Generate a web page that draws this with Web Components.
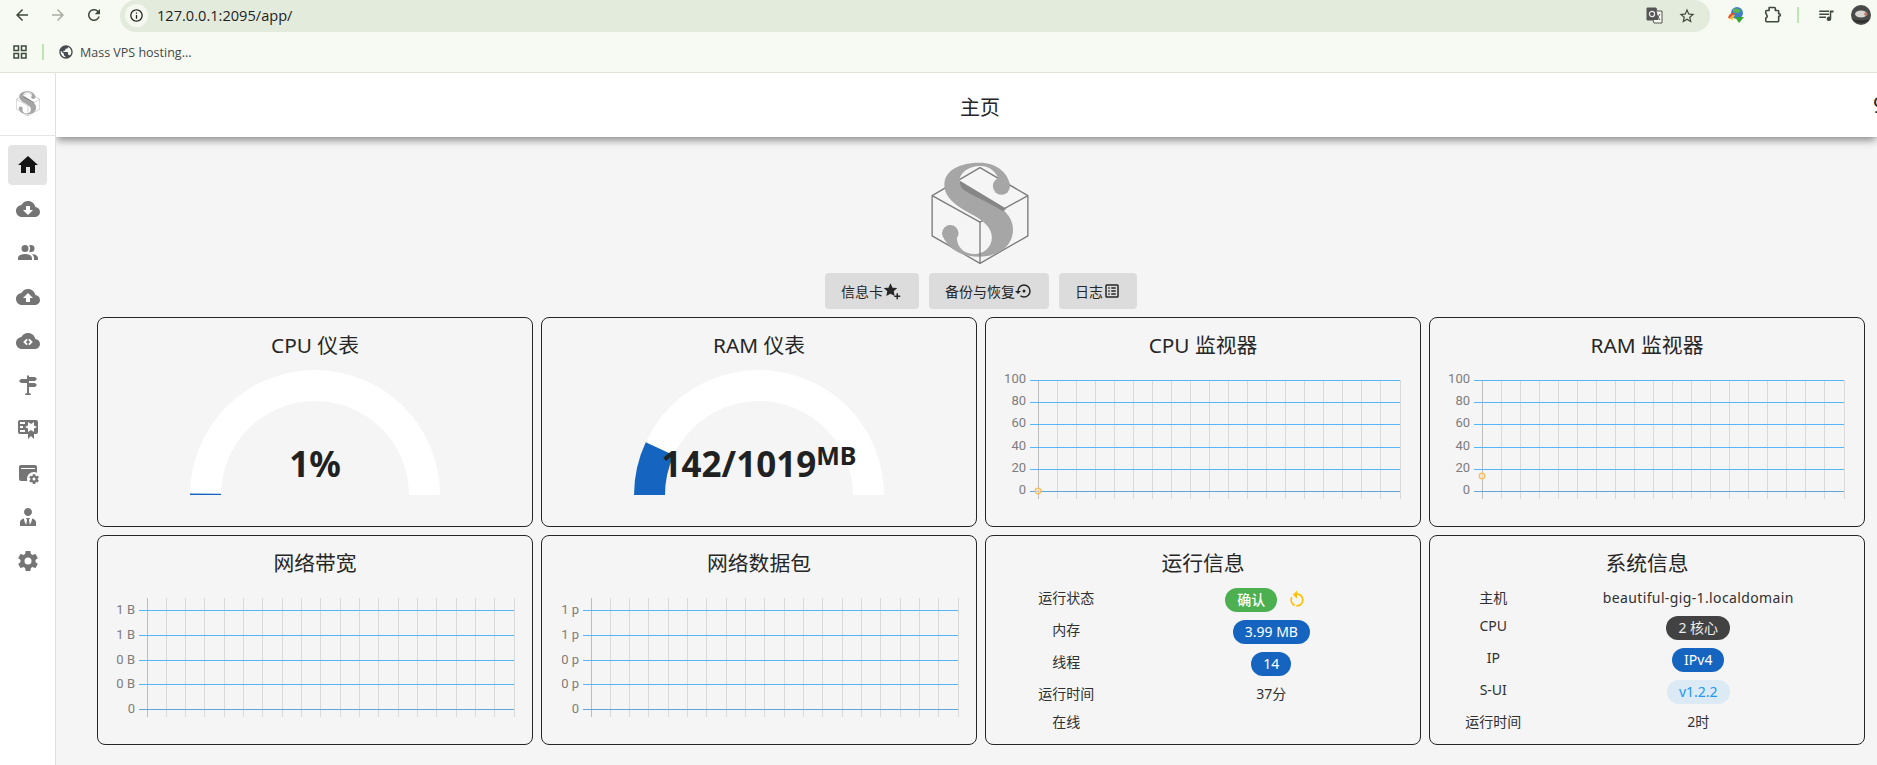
<!DOCTYPE html>
<html lang="zh">
<head>
<meta charset="utf-8">
<title>S-UI</title>
<style>
  html, body { margin: 0; height: 100%; overflow: hidden; background: #f5f5f5; }
  body { font-family: "Noto Sans", "Noto Sans CJK SC", sans-serif; color: #212121; }
</style>
</head>
<body>
<app-shell>
  <dash-card label="CPU 仪表"><gauge-chart pct="0.4" value="1%"></gauge-chart></dash-card>
  <dash-card label="RAM 仪表"><gauge-chart pct="13.9" value="142/1019" unit="MB"></gauge-chart></dash-card>
  <dash-card label="CPU 监视器"><line-chart labels="100,80,60,40,20,0" top="14" step="22.2" tick="44" first="51.5" last="413.5" lift="2" dot="125"></line-chart></dash-card>
  <dash-card label="RAM 监视器"><line-chart labels="100,80,60,40,20,0" top="14" step="22.2" tick="44" first="51.5" last="413.5" lift="2" dot="110"></line-chart></dash-card>
  <dash-card label="网络带宽"><line-chart labels="1 B,1 B,0 B,0 B,0" top="26" step="24.75" tick="41" first="48.5" last="415.5" lift="1"></line-chart></dash-card>
  <dash-card label="网络数据包"><line-chart labels="1 p,1 p,0 p,0 p,0" top="26" step="24.75" tick="41" first="48.5" last="415.5" lift="1"></line-chart></dash-card>
  <dash-card label="运行信息">
    <info-table span="4">
      <info-row label="运行状态" chip><status-chip tone="green"><b>确认</b></status-chip><reload-button></reload-button></info-row>
      <info-row label="内存" chip><status-chip tone="blue">3.99 MB</status-chip></info-row>
      <info-row label="线程" chip><status-chip tone="blue">14</status-chip></info-row>
      <info-row label="运行时间">37分</info-row>
      <info-row label="在线"></info-row>
    </info-table>
  </dash-card>
  <dash-card label="系统信息">
    <info-table span="3">
      <info-row label="主机"><span style="letter-spacing:.37px">beautiful-gig-1.localdomain</span></info-row>
      <info-row label="CPU" chip><status-chip tone="dark">2 核心</status-chip></info-row>
      <info-row label="IP" chip><status-chip tone="blue">IPv4</status-chip></info-row>
      <info-row label="S-UI" chip><status-chip tone="light">v1.2.2</status-chip></info-row>
      <info-row label="运行时间">2时</info-row>
    </info-table>
  </dash-card>
</app-shell>

<script>
const mdi = {
  home: 'M10,20V14H14V20H19V12H22L12,3L2,12H5V20H10Z',
  cloudDown: 'M19.35 10.04C18.67 6.59 15.64 4 12 4 9.11 4 6.6 5.64 5.35 8.04 2.34 8.36 0 10.91 0 14c0 3.31 2.69 6 6 6h13c2.76 0 5-2.24 5-5 0-2.64-2.05-4.78-4.65-4.96zM17 13l-5 5-5-5h3V9h4v4h3z',
  users: 'M16 17V19H2V17S2 13 9 13 16 17 16 17M12.5 7.5A3.5 3.5 0 1 0 9 11A3.5 3.5 0 0 0 12.5 7.5M15.94 13A5.32 5.32 0 0 1 18 17V19H22V17S22 13.37 15.94 13M15 4A3.39 3.39 0 0 0 13.07 4.59A5 5 0 0 1 13.07 10.41A3.39 3.39 0 0 0 15 11A3.5 3.5 0 0 0 15 4Z',
  cloudUp: 'M19.35 10.04C18.67 6.59 15.64 4 12 4 9.11 4 6.6 5.64 5.35 8.04 2.34 8.36 0 10.91 0 14c0 3.31 2.69 6 6 6h13c2.76 0 5-2.24 5-5 0-2.64-2.05-4.78-4.65-4.96zM14 13v4h-4v-4H7l5-5 5 5h-3z',
  cloudCode: 'M19.35 10.04C18.67 6.59 15.64 4 12 4 9.11 4 6.6 5.64 5.35 8.04 2.34 8.36 0 10.91 0 14c0 3.31 2.69 6 6 6h13c2.76 0 5-2.24 5-5 0-2.64-2.05-4.78-4.65-4.96zM10.5 16.3L7.2 13l3.3-3.3 1.3 1.3-2 2 2 2zM13.5 16.3l-1.3-1.3 2-2-2-2 1.3-1.3 3.3 3.3z',
  routes: 'M11,10H5L3,8L5,6H11V3L12,2L13,3V4H19L21,6L19,8H13V10H19L21,12L19,14H13V20A2,2 0 0,1 15,22H9A2,2 0 0,1 11,20V10Z',
  cert: 'M4,3C2.89,3 2,3.89 2,5V15A2,2 0 0,0 4,17H12V22L15,19L18,22V17H20A2,2 0 0,0 22,15V8L22,6V5A2,2 0 0,0 20,3H16V3H4M12,5L15,7L18,5V8.5L21,10L18,11.5V15L15,13L12,15V11.5L9,10L12,8.5V5M4,5H9V7H4V5M4,9H7V11H4V9M4,13H9V15H4V13Z',
  appCog: 'M21.7 18.6V17.6L22.8 16.8C22.9 16.7 23 16.6 22.9 16.5L21.9 14.8C21.9 14.7 21.7 14.7 21.6 14.7L20.4 15.2C20.1 15 19.8 14.8 19.5 14.7L19.3 13.4C19.3 13.3 19.2 13.2 19.1 13.2H17.1C16.9 13.2 16.8 13.3 16.8 13.4L16.6 14.7C16.3 14.9 16.1 15 15.8 15.2L14.6 14.7C14.5 14.7 14.4 14.7 14.3 14.8L13.3 16.5C13.3 16.6 13.3 16.7 13.4 16.8L14.5 17.6V18.6L13.4 19.4C13.3 19.5 13.2 19.6 13.3 19.7L14.3 21.4C14.4 21.5 14.5 21.5 14.6 21.5L15.8 21C16 21.2 16.3 21.4 16.6 21.5L16.8 22.8C16.9 22.9 17 23 17.1 23H19.1C19.2 23 19.3 22.9 19.3 22.8L19.5 21.5C19.8 21.3 20 21.2 20.3 21L21.5 21.4C21.6 21.4 21.7 21.4 21.8 21.3L22.8 19.6C22.9 19.5 22.9 19.4 22.8 19.4L21.7 18.6M18 19.5C17.2 19.5 16.5 18.8 16.5 18S17.2 16.5 18 16.5 19.5 17.2 19.5 18 18.8 19.5 18 19.5M11 18C11 14.1 14.1 11 18 11C19.1 11 20.1 11.3 21 11.7V6C21 4.9 20.1 4 19 4H5C3.9 4 3 4.9 3 6V18C3 19.1 3.9 20 5 20H11.3C11.1 19.4 11 18.7 11 18M5 7H19V8H5V7Z',
  tie: 'M12 3C14.21 3 16 4.79 16 7S14.21 11 12 11 8 9.21 8 7 9.79 3 12 3M16 13.54C16 14.6 15.72 17.07 13.81 19.83L13 15L13.94 13.12C13.32 13.05 12.67 13 12 13S10.68 13.05 10.06 13.12L11 15L10.19 19.83C8.28 17.07 8 14.6 8 13.54C5.61 14.24 4 15.5 4 17V21H20V17C20 15.5 18.4 14.24 16 13.54Z',
  cog: 'M12,15.5A3.5,3.5 0 0,1 8.5,12A3.5,3.5 0 0,1 12,8.5A3.5,3.5 0 0,1 15.5,12A3.5,3.5 0 0,1 12,15.5M19.43,12.97C19.47,12.65 19.5,12.33 19.5,12C19.5,11.67 19.47,11.34 19.43,11L21.54,9.37C21.73,9.22 21.78,8.95 21.66,8.73L19.66,5.27C19.54,5.05 19.27,4.96 19.05,5.05L16.56,6.05C16.04,5.66 15.5,5.32 14.87,5.07L14.5,2.42C14.46,2.18 14.25,2 14,2H10C9.75,2 9.54,2.18 9.5,2.42L9.13,5.07C8.5,5.32 7.96,5.66 7.44,6.05L4.95,5.05C4.73,4.96 4.46,5.05 4.34,5.27L2.34,8.73C2.21,8.95 2.27,9.22 2.46,9.37L4.57,11C4.53,11.34 4.5,11.67 4.5,12C4.5,12.33 4.53,12.65 4.57,12.97L2.46,14.63C2.27,14.78 2.21,15.05 2.34,15.27L4.34,18.73C4.46,18.95 4.73,19.03 4.95,18.95L7.44,17.94C7.96,18.34 8.5,18.68 9.13,18.93L9.5,21.58C9.54,21.82 9.75,22 10,22H14C14.25,22 14.46,21.82 14.5,21.58L14.87,18.93C15.5,18.67 16.04,18.34 16.56,17.94L19.05,18.95C19.27,19.03 19.54,18.95 19.66,18.73L21.66,15.27C21.78,15.05 21.73,14.78 21.54,14.63L19.43,12.97Z',
  starPlus: 'M10 1.500l2.700 6 6.300.6-4.700 4.300 1.300 6.300-5.600-3.200-5.600 3.200 1.300-6.300L1 8.100l6.300-.6zM18 15h2v3h3v2h-3v3h-2v-3h-3v-2h3z',
  restore: 'M12,3A9,9 0 0,0 3,12H0L4,16L8,12H5A7,7 0 0,1 12,5A7,7 0 0,1 19,12A7,7 0 0,1 12,19C10.5,19 9.09,18.5 7.94,17.7L6.5,19.14C8.04,20.3 9.94,21 12,21A9,9 0 0,0 21,12A9,9 0 0,0 12,3M14,12A2,2 0 0,0 12,10A2,2 0 0,0 10,12A2,2 0 0,0 12,14A2,2 0 0,0 14,12Z',
  listBox: 'M5 3h14a2 2 0 0 1 2 2v14a2 2 0 0 1-2 2H5a2 2 0 0 1-2-2V5a2 2 0 0 1 2-2zm0 2v14h14V5zM7 7h2v2H7zM11 7h6v2h-6zM7 11h2v2H7zM11 11h6v2h-6zM7 15h2v2H7zM11 15h6v2h-6z',
  restart: 'M12,4C14.1,4 16.1,4.8 17.6,6.3C20.7,9.4 20.7,14.5 17.6,17.6C15.8,19.5 13.3,20.2 10.9,19.9L11.4,17.9C13.1,18.1 14.9,17.5 16.2,16.2C18.5,13.9 18.5,10.1 16.2,7.7C15.1,6.6 13.5,6 12,6V10.6L7,5.6L12,0.6V4M6.3,17.6C3.7,15 3.3,11 5.1,7.9L6.6,9.4C5.5,11.6 5.9,14.4 7.8,16.2C8.3,16.7 8.9,17.1 9.6,17.4L9,19.4C8,19 7.1,18.4 6.3,17.6Z',
  back: 'M20 11H7.83l5.59-5.59L12 4l-8 8 8 8 1.41-1.41L7.83 13H20v-2z',
  forward: 'M4 11h12.17l-5.59-5.59L12 4l8 8-8 8-1.41-1.41L16.17 13H4v-2z',
  reload: 'M17.65 6.35C16.2 4.9 14.21 4 12 4c-4.42 0-7.99 3.58-7.99 8s3.57 8 7.99 8c3.73 0 6.84-2.55 7.73-6h-2.08c-.82 2.33-3.04 4-5.65 4-3.31 0-6-2.69-6-6s2.69-6 6-6c1.66 0 3.14.69 4.22 1.78L13 11h7V4l-2.35 2.35z',
  star: 'M22 9.24l-7.19-.62L12 2 9.19 8.63 2 9.24l5.46 4.73L5.82 21 12 17.27 18.18 21l-1.63-7.03L22 9.24zM12 15.4l-3.76 2.27 1-4.28-3.32-2.88 4.38-.38L12 6.1l1.71 4.04 4.38.38-3.32 2.88 1 4.28L12 15.4z',
  info: 'M11 7h2v2h-2zm0 4h2v6h-2zm1-9C6.48 2 2 6.48 2 12s4.48 10 10 10 10-4.48 10-10S17.52 2 12 2zm0 18c-4.41 0-8-3.59-8-8s3.59-8 8-8 8 3.59 8 8-3.59 8-8 8z',
  apps: 'M3 3h8v8H3zm2 2v4h4V5zM13 3h8v8h-8zm2 2v4h4V5zM3 13h8v8H3zm2 2v4h4v-4zM13 13h8v8h-8zm2 2v4h4v-4z',
  globe: 'M12 2C6.48 2 2 6.48 2 12s4.48 10 10 10 10-4.48 10-10S17.52 2 12 2zm-1 17.93C7.05 19.44 4 16.08 4 12c0-.62.08-1.21.21-1.790L9 15v1c0 1.100.9 2 2 2v1.930zm6.900-2.540c-.26-.81-1-1.390-1.900-1.390h-1v-3c0-.55-.45-1-1-1H8v-2h2c.55 0 1-.45 1-1V7h2c1.100 0 2-.9 2-2v-.41c2.930 1.190 5 4.060 5 7.410 0 2.080-.8 3.970-2.100 5.390z',
  puzzle: 'M8.500 3h6.500a1 1 0 0 1 1 1v2.500h3a1 1 0 0 1 1 1V10.500h.5a1.500 1.500 0 0 1 0 3H20v5.500a1 1 0 0 1-1 1H5.500a1 1 0 0 1-1-1V15.500a2 2 0 0 0 1-3.500 2 2 0 0 0-1-2V7.500a1 1 0 0 1 1-1h3V4a1 1 0 0 1 .5-1z',
  queue: 'M3 6h13v2H3zM3 10h13v2H3zM3 14h9v2H3zM17 6h5v2.500h-3V17a3 3 0 1 1-2-2.830z'
};
const icon = (d, size, color = 'currentColor') =>
  `<svg width="${size}" height="${size}" viewBox="0 0 24 24" fill="${color}" fill-rule="evenodd" style="display:block;flex:none"><path d="${d}"/></svg>`;

const logoMarkup = (w, h) => `
  <svg width="${w}" height="${h}" viewBox="393 66 294 309" style="display:block">
    <g fill="none" stroke="#7b7b7b" stroke-width="4" stroke-linejoin="round">
      <path d="M540 83L685 168V290L540 373L395 290V168Z"/>
      <path d="M395 168L540 248M540 248L685 168"/>
    </g>
    <g fill="#a6a6a6">
      <circle cx="605" cy="139" r="26"/>
      <circle cx="450" cy="282" r="25"/>
      <path d="M630 135C625 95 585 68 540 68C480 68 432 90 432 135C432 175 470 200 510 222C545 240 576 262 576 295C576 325 550 345 525 345C490 345 472 325 470 298L428 288C438 325 480 353 535 353C600 353 640 320 640 270C640 225 600 200 560 178C520 158 478 145 478 122C478 100 505 78 540 78C575 78 590 100 600 125Z"/>
    </g>
    <path d="M478 122L620 208L610 215C570 190 520 170 490 150C482 143 478 132 478 122Z" fill="#868686"/>
    <path d="M540 248V373" fill="none" stroke="#7b7b7b" stroke-width="4"/>
  </svg>`;

class AppShell extends HTMLElement {
  constructor() {
    super();
    this.attachShadow({mode: 'open'}).innerHTML = `
      <style>
        :host { display: flex; flex-direction: column; height: 765px; overflow: hidden; }
        .body { flex: 1; display: flex; min-height: 0; }
        main { flex: 1; min-width: 0; display: flex; flex-direction: column; }
        .content { flex: 1; padding: 25px 12px 0 41px; display: flex; flex-direction: column; align-items: center; background: #f5f5f5; }
        s-logo { margin-right: 2px; }
        .actions { display: flex; gap: 10px; margin-top: 9px; margin-bottom: 8px; }
        .grid { width: 100%; display: grid; grid-template-columns: repeat(4, 1fr); grid-auto-rows: 210px; gap: 8px; }
      </style>
      <browser-chrome></browser-chrome>
      <div class="body">
        <side-nav></side-nav>
        <main>
          <app-bar>主页</app-bar>
          <div class="content">
            <s-logo></s-logo>
            <div class="actions">
              <tonal-button icon="starPlus" style="padding-right:18px">信息卡</tonal-button>
              <tonal-button icon="restore">备份与恢复</tonal-button>
              <tonal-button icon="listBox">日志</tonal-button>
            </div>
            <div class="grid"><slot></slot></div>
          </div>
        </main>
      </div>`;
  }
}

class BrowserChrome extends HTMLElement {
  constructor() {
    super();
    this.attachShadow({mode: 'open'}).innerHTML = `
      <style>
        :host { display: block; height: 73px; box-sizing: border-box; background: #f7faf2; border-bottom: 1px solid #dfe5d8; font-family: "Open Sans", Roboto, sans-serif; color: #3f4a3c; flex: none; }
        .top { height: 32px; display: flex; align-items: center; padding-left: 4px; }
        .btn { width: 36px; height: 32px; display: flex; align-items: center; justify-content: center; margin-top: -2px; }
        .pill { flex: 1; height: 32px; margin-left: 8px; background: #e3ebdd; border-radius: 16px; display: flex; align-items: center; padding-left: 5px; padding-right: 14px; }
        .badge { width: 23px; height: 23px; border-radius: 50%; background: #f4f8ef; display: flex; align-items: center; justify-content: center; margin-top: -2px; color: #1f1f1f; }
        .url { font-size: 14.6px; color: #1f1f1f; margin-left: 9px; margin-top: -2px; flex: 1; }
        .pill svg.t { margin-right: 15px; margin-top: -2px; }
        .right { display: flex; align-items: center; width: 167px; flex: none; padding-left: 8px; box-sizing: border-box; }
        .cell { width: 36px; height: 32px; display: flex; align-items: center; justify-content: center; margin-top: -2px; }
        .sep { width: 2px; height: 16px; background: #bbe7b0; margin: -2px 9px 0 7px; }
        .avatar { margin-left: 7px; margin-top: -2px; }
        .marks { height: 40px; display: flex; align-items: center; padding-left: 11px; }
        .marks .sep { margin: 0 14px 0 13px; }
        .mark { font-size: 12.5px; margin-left: 6px; color: #44484a; }
      </style>
      <div class="top">
        <div class="btn">${icon(mdi.back, 18)}</div>
        <div class="btn" style="color:#a9aea5">${icon(mdi.forward, 18)}</div>
        <div class="btn">${icon(mdi.reload, 18)}</div>
        <div class="pill">
          <div class="badge">${icon(mdi.info, 15)}</div>
          <div class="url">127.0.0.1:2095/app/</div>
          <svg class="t" width="17" height="17" viewBox="0 0 17 17">
            <path d="M1 1h9l1 3h5v12H8l-1-3H1z" fill="#f4f8ef" stroke="#555" stroke-width="1"/>
            <path d="M1 1h9l2.500 12H1z" fill="#555"/>
            <circle cx="6" cy="7" r="2.600" fill="none" stroke="#eee" stroke-width="1.200"/>
            <path d="M10 7l4 6M14 7l-4 6" stroke="#555" stroke-width="1"/>
          </svg>
          ${icon(mdi.star, 18, '#3f4a3c')}
        </div>
        <div class="right">
          <div class="cell">
            <svg width="18" height="18" viewBox="0 0 18 18">
              <circle cx="10" cy="7" r="6" fill="#3f7fc9"/>
              <path d="M6 3c2-1 6-1 8 2l-3 2-5-1z" fill="#5cb848"/>
              <path d="M1 12c1-5 5-6 8-4-3 0-4 2-4 5z" fill="#e8552e"/>
              <path d="M3 13c1-4 3-4 5-4-1 1-2 3-2 5z" fill="#f4c430"/>
              <path d="M8 11h9l-5 6z" fill="#35a82e"/>
            </svg>
          </div>
          <div class="cell"><svg width="20" height="20" viewBox="0 0 24 24" fill="none" stroke="#3f4a3c" stroke-width="1.900" stroke-linejoin="round"><path d="${mdi.puzzle}"/></svg></div>
          <div class="sep"></div>
          <div class="cell">${icon(mdi.queue, 18)}</div>
          <svg class="avatar" width="20" height="20" viewBox="0 0 20 20">
            <circle cx="10" cy="10" r="10" fill="#4a4a4a"/>
            <ellipse cx="10" cy="9" rx="6" ry="3.500" fill="#d9d5d0"/>
            <circle cx="15" cy="9" r="1.800" fill="#b57a60"/>
            <path d="M2 14c4 2 12 2 16 0-2 5-14 5-16 0z" fill="#2c2c2c"/>
          </svg>
        </div>
      </div>
      <div class="marks">
        ${icon(mdi.apps, 18)}
        <div class="sep"></div>
        ${icon(mdi.globe, 16, '#454b4e')}
        <div class="mark">Mass VPS hosting...</div>
      </div>`;
  }
}

class SideNav extends HTMLElement {
  constructor() {
    super();
    const items = ['home', 'cloudDown', 'users', 'cloudUp', 'cloudCode', 'routes', 'cert', 'appCog', 'tie', 'cog'];
    this.attachShadow({mode: 'open'}).innerHTML = `
      <style>
        :host { display: block; width: 56px; flex: none; box-sizing: border-box; background: #fff; border-right: 1px solid #e0e0e0; }
        .logo { height: 63px; box-sizing: border-box; border-bottom: 1px solid #e5e5e5; display: flex; align-items: center; justify-content: center; padding-bottom: 1px; }
        ul { list-style: none; margin: 0; padding: 9px 8px 0 8px; display: flex; flex-direction: column; gap: 4px; }
        li { height: 40px; display: flex; align-items: center; justify-content: center; border-radius: 4px; color: #757575; }
        li.on { background: #e4e4e4; color: #141414; }
      </style>
      <div class="logo">${logoMarkup(24, 25)}</div>
      <ul>${items.map((n, i) => `<li class="${i ? '' : 'on'}">${icon(mdi[n], 24)}</li>`).join('')}</ul>`;
  }
}

class AppBar extends HTMLElement {
  constructor() {
    super();
    this.attachShadow({mode: 'open'}).innerHTML = `
      <style>
        :host { display: flex; align-items: center; height: 64px; flex: none; background: #fff; box-shadow: 0 4px 8px -1px rgba(0,0,0,.45); clip-path: inset(0 0 -20px 0); position: relative; font-size: 20px; }
        .title { flex: 1; text-align: center; padding-left: 31px; margin-top: 3px; color: #262626; }
        .end { width: 4px; overflow: hidden; font-size: 22px; margin-top: -3px; color: #262626; }
      </style>
      <div class="title"><slot></slot></div>
      <div class="end">9</div>`;
  }
}

class SLogo extends HTMLElement {
  constructor() {
    super();
    this.attachShadow({mode: 'open'}).innerHTML = `
      <style>:host { display: block; flex: none; }</style>${logoMarkup(98, 102)}`;
  }
}

class TonalButton extends HTMLElement {
  constructor() {
    super();
    this.attachShadow({mode: 'open'}).innerHTML = `
      <style>
        :host { display: inline-flex; align-items: center; height: 36px; padding: 0 16px; background: #dcdcdc; border-radius: 4px; font-size: 14px; color: #262626; }
      </style>
      <slot></slot><span id="i"></span>`;
  }
  connectedCallback() {
    this.shadowRoot.getElementById('i').innerHTML = icon(mdi[this.getAttribute('icon')], 18);
  }
}

class DashCard extends HTMLElement {
  constructor() {
    super();
    this.attachShadow({mode: 'open'}).innerHTML = `
      <style>
        :host { display: block; box-sizing: border-box; border: 1px solid #262626; border-radius: 8px; background: #f5f5f5; overflow: hidden; min-width: 0; }
        h3 { margin: 0; box-sizing: border-box; height: 48px; padding-top: 11px; font-size: 20.8px; font-weight: 400; line-height: 32px; text-align: center; color: #262626; }
      </style>
      <h3 id="t"></h3><slot></slot>`;
  }
  connectedCallback() {
    this.shadowRoot.getElementById('t').textContent = this.getAttribute('label');
  }
}

class GaugeChart extends HTMLElement {
  constructor() {
    super();
    this.attachShadow({mode: 'open'});
  }
  connectedCallback() {
    const cx = 217, cy = 129, R = 125, r = 94;
    const pt = (rad, deg) => {
      const a = deg * Math.PI / 180;
      return `${(cx - rad * Math.cos(a)).toFixed(2)} ${(cy - rad * Math.sin(a)).toFixed(2)}`;
    };
    const arc = deg => `M${pt(R, 0)}A${R} ${R} 0 0 1 ${pt(R, deg)}L${pt(r, deg)}A${r} ${r} 0 0 0 ${pt(r, 0)}Z`;
    const pct = +this.getAttribute('pct');
    const unit = this.getAttribute('unit');
    this.shadowRoot.innerHTML = `
      <style>
        :host { display: block; }
        svg { display: block; }
        text { font-weight: 700; font-size: 35px; fill: #212121; font-family: "Noto Sans", sans-serif; }
        .u { font-size: 25px; }
      </style>
      <svg width="434" height="160">
        <path d="${arc(180)}" fill="#fff"/>
        <path d="${arc(pct * 1.8)}" fill="#1565c0"/>
        <text x="${cx}" y="110.500" text-anchor="middle">${this.getAttribute('value')}${unit ? `<tspan class="u" dy="-12">${unit}</tspan>` : ''}</text>
      </svg>`;
  }
}

class LineChart extends HTMLElement {
  constructor() {
    super();
    this.attachShadow({mode: 'open'});
  }
  connectedCallback() {
    const n = k => +this.getAttribute(k);
    const labels = this.getAttribute('labels').split(',');
    const first = n('first'), last = n('last');
    let grid = '';
    for (let i = 0; i < 20; i++) {
      const x = Math.round(first + i * (last - first) / 19) + .5;
      grid += `<line x1="${x}" x2="${x}" y1="14" y2="133" stroke="${i ? '#dadada' : '#bdbdbd'}"/>`;
    }
    labels.forEach((l, i) => {
      const y = Math.round(n('top') + i * n('step')) + .5;
      const end = i === labels.length - 1;
      grid += `<line x1="${n('tick')}" x2="${last + .5}" y1="${y}" y2="${y}" stroke="${end ? '#62a5d8' : '#55b7f7'}"/>`;
      grid += `<text x="${n('tick') - 4}" y="${y - n('lift')}" text-anchor="end" dominant-baseline="central">${l}</text>`;
    });
    const dot = this.hasAttribute('dot')
      ? `<circle cx="${first + .5}" cy="${n('dot')}" r="2.800" fill="#fde3b5" fill-opacity=".6" stroke="#f9bd5c" stroke-width="1.200"/>` : '';
    this.shadowRoot.innerHTML = `
      <style>
        :host { display: block; }
        svg { display: block; }
        text { font-size: 13px; fill: #7d7d7d; font-family: Roboto, sans-serif; }
      </style>
      <svg width="434" height="160">${grid}${dot}</svg>`;
  }
}

class InfoTable extends HTMLElement {
  constructor() {
    super();
    this.attachShadow({mode: 'open'}).innerHTML = `
      <style>
        :host { display: flex; flex-direction: column; padding: 0 12px; font-size: 14px; color: #303030; }
      </style>
      <slot></slot>`;
  }
  connectedCallback() {
    // 410px of inner width split on a 12 column basis, as the original page does
    this.style.setProperty('--label-w', (410 * +this.getAttribute('span') / 12) + 'px');
  }
}

class InfoRow extends HTMLElement {
  constructor() {
    super();
    this.attachShadow({mode: 'open'}).innerHTML = `
      <style>
        :host { display: grid; grid-template-columns: var(--label-w) 1fr; height: 28px; line-height: 28px; text-align: center; }
        :host([chip]) { height: 32px; }
        .v { display: flex; align-items: center; justify-content: center; }
        :host([chip]) .v { height: 32px; }
      </style>
      <div id="l"></div>
      <div class="v"><slot></slot></div>`;
  }
  connectedCallback() {
    this.shadowRoot.getElementById('l').textContent = this.getAttribute('label');
  }
}

class StatusChip extends HTMLElement {
  constructor() {
    super();
    this.attachShadow({mode: 'open'}).innerHTML = `
      <style>
        :host { display: inline-flex; align-items: center; height: 24px; padding: 0 12px; border-radius: 12px; font-size: 14px; line-height: 24px; white-space: nowrap; }
        :host([tone=green]) { background: #4caf50; color: #fff; }
        :host([tone=blue]) { background: #1565c0; color: #fff; }
        :host([tone=dark]) { background: #424242; color: #eee; }
        :host([tone=light]) { background: #dceaf6; color: #2196f3; }
        ::slotted(b) { font-weight: 500; font-size: 14px; }
      </style>
      <slot></slot>`;
  }
}

class ReloadButton extends HTMLElement {
  constructor() {
    super();
    this.attachShadow({mode: 'open'}).innerHTML = `
      <style>
        :host { display: flex; align-items: center; justify-content: center; width: 40px; height: 24px; }
      </style>
      ${icon(mdi.restart, 20, '#ffc107')}`;
  }
}

customElements.define('browser-chrome', BrowserChrome);
customElements.define('side-nav', SideNav);
customElements.define('app-bar', AppBar);
customElements.define('s-logo', SLogo);
customElements.define('tonal-button', TonalButton);
customElements.define('dash-card', DashCard);
customElements.define('gauge-chart', GaugeChart);
customElements.define('line-chart', LineChart);
customElements.define('info-table', InfoTable);
customElements.define('info-row', InfoRow);
customElements.define('status-chip', StatusChip);
customElements.define('reload-button', ReloadButton);
customElements.define('app-shell', AppShell);
</script>
</body>
</html>
